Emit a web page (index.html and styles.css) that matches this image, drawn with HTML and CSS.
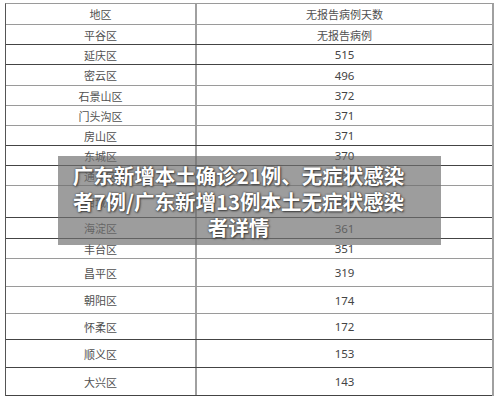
FILE: index.html
```html
<!DOCTYPE html>
<html lang="zh-CN">
<head>
<meta charset="utf-8">
<title>广东新增本土确诊</title>
<link rel="stylesheet" href="styles.css">
</head>
<body>
<div class="page">
  <div class="table">
    <div class="row r21 g"><div class="c1">地区</div><div class="c2 cjk">无报告病例天数</div></div>
    <div class="row r20 d"><div class="c1">平谷区</div><div class="c2 cjk">无报告病例</div></div>
    <div class="row r20 d"><div class="c1">延庆区</div><div class="c2">515</div></div>
    <div class="row r21 g"><div class="c1">密云区</div><div class="c2">496</div></div>
    <div class="row r20 g"><div class="c1">石景山区</div><div class="c2">372</div></div>
    <div class="row r20 g"><div class="c1">门头沟区</div><div class="c2">371</div></div>
    <div class="row r20 d"><div class="c1">房山区</div><div class="c2">371</div></div>
    <div class="row r20 d"><div class="c1">东城区</div><div class="c2">370</div></div>
    <div class="row r20 g"><div class="c1">通州区</div><div class="c2">369</div></div>
    <div class="row r32 d"><div class="c1">西城区</div><div class="c2">362</div></div>
    <div class="row r21 d"><div class="c1">海淀区</div><div class="c2">361</div></div>
    <div class="row r20 g"><div class="c1">丰台区</div><div class="c2">351</div></div>
    <div class="row r28 g"><div class="c1">昌平区</div><div class="c2">319</div></div>
    <div class="row r27 g"><div class="c1">朝阳区</div><div class="c2">174</div></div>
    <div class="row r26 d"><div class="c1">怀柔区</div><div class="c2">172</div></div>
    <div class="row r28 d"><div class="c1">顺义区</div><div class="c2">153</div></div>
    <div class="row r28 d"><div class="c1">大兴区</div><div class="c2">143</div></div>
  </div>
  <div class="overlay">
    <h1 class="title">广东新增本土确诊21例、无症状感染<br>者7例/广东新增13例本土无症状感染<br>者详情</h1>
  </div>
</div>
</body>
</html>
```

FILE: styles.css
```css
* { box-sizing: border-box; }
html, body {
  margin: 0;
  padding: 0;
  background: #ffffff;
}
.page {
  position: relative;
  width: 500px;
  height: 401px;
  padding-top: 3px;
  padding-left: 5px;
  overflow: hidden;
}
.table {
  width: 489px;
  border-top: 1px solid #9a9a9a;
  border-left: 1px solid #555;
  border-right: 2px solid #a0a0a0;
  display: flex;
  flex-direction: column;
}
.row {
  display: grid;
  grid-template-columns: 191px 1fr;
  border-bottom: 1px solid #444;
}
.row.g { border-bottom-color: #9a9a9a; }
.row.d { border-bottom-color: #444; }
.r20 { height: 20px; }
.r21 { height: 21px; }
.r26 { height: 26px; }
.r27 { height: 27px; }
.r28 { height: 28px; }
.r32 { height: 32px; }
.c1, .c2 {
  display: flex;
  align-items: center;
  justify-content: center;
  color: #505050;
  font-size: 11px;
}
.c1 {
  font-family: "Noto Sans CJK SC", sans-serif;
  border-right: 2px solid #a0a0a0;
}
.c2 {
  font-family: "Noto Sans", "Noto Sans CJK SC", sans-serif;
  font-size: 11.5px;
  color: #444;
}
.c2.cjk {
  font-family: "Noto Sans CJK SC", sans-serif;
  font-size: 11px;
  color: #505050;
}
.overlay {
  position: absolute;
  left: 58px;
  top: 156px;
  width: 383px;
  height: 89px;
  background: rgba(110, 110, 110, 0.68);
  padding: 6px 32px 0 10px;
}
.title {
  margin: 0;
  font-family: "Noto Sans CJK SC", sans-serif;
  font-weight: 700;
  font-size: 20.5px;
  line-height: 26px;
  color: #ffffff;
  text-align: center;
  white-space: nowrap;
  text-shadow: 0 0 2px #333, 1px 1px 2px #444;
}
```
